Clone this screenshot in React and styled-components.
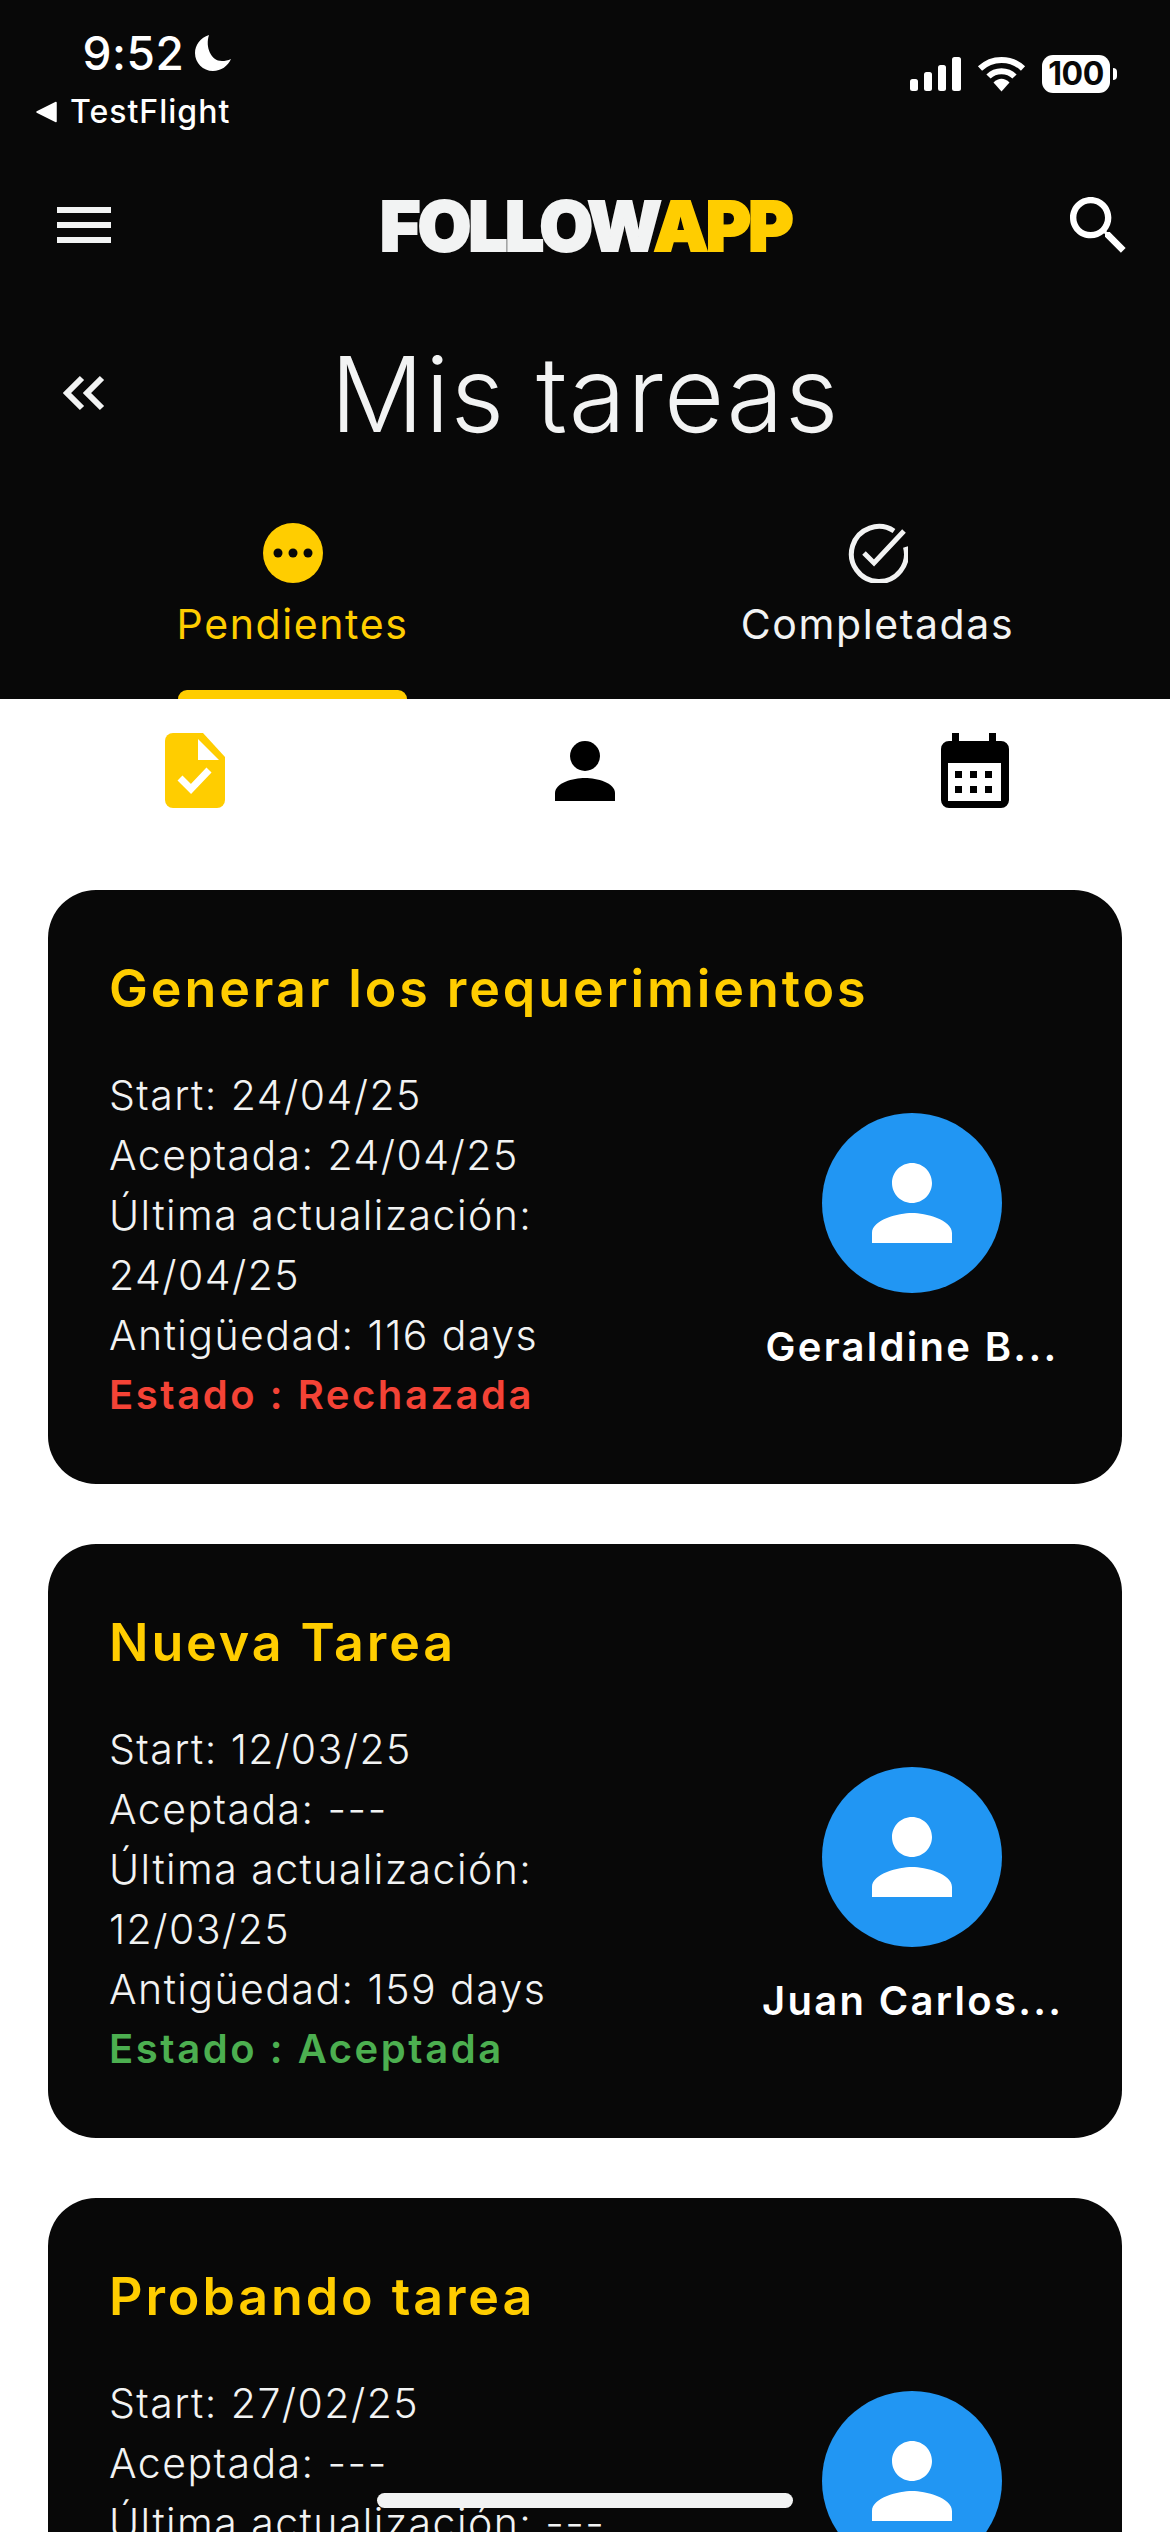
import React from 'react';
import styled, { createGlobalStyle } from 'styled-components';

const Y = '#ffcd00', K = '#080808', W = '#f2f3f3';
const Global = createGlobalStyle`
  html, body { margin: 0; padding: 0; background: #fff; overflow: hidden; height: 2532px; }
  body { font-family: Inter, "Liberation Sans", sans-serif; }
  * { box-sizing: border-box; }
`;
const Page = styled.div`width:1170px;height:2532px;overflow:hidden;background:#fff;position:relative;`;
const Header = styled.header`background:${K};height:699px;color:${W};display:flex;flex-direction:column;`;
const StatusBar = styled.div`height:190px;display:flex;justify-content:space-between;padding:0 60px 0 36px;flex:none;`;
const StatusLeft = styled.div`display:flex;flex-direction:column;align-items:flex-end;padding-top:26px;color:#fff;`;
const TimeRow = styled.div`display:flex;align-items:center;gap:11px;font-size:46px;font-weight:500;line-height:54px;letter-spacing:.5px;margin-right:1px;`;
const BackApp = styled.div`display:flex;align-items:center;gap:12px;font-size:32px;font-weight:500;line-height:40px;margin:12px 2px 0 0;letter-spacing:1px;`;
const StatusRight = styled.div`display:flex;align-items:center;gap:16px;height:38px;margin-top:55px;`;
const Battery = styled.div`width:68px;height:38px;border-radius:11px;background:#fff;color:${K};font-size:32px;font-weight:700;line-height:38px;text-align:center;position:relative;letter-spacing:-.5px;
  &::after{content:"";position:absolute;left:71px;top:13px;width:4px;height:12px;border-radius:0 4px 4px 0;background:#fff;}`;
const Nav = styled.div`height:72px;margin-top:-1px;display:flex;align-items:center;justify-content:space-between;padding:0 44px 0 57px;flex:none;`;
const Logo = styled.div`font-family:Inter,sans-serif;font-weight:900;font-size:69px;line-height:72px;letter-spacing:-2.6px;-webkit-text-stroke:2px currentColor;color:${W};transform:translate(-5px,1px);`;
const LogoAccent = styled.span`color:${Y};`;
const TitleRow = styled.div`height:132px;margin-top:67px;position:relative;display:flex;align-items:center;justify-content:center;flex:none;`;
const Title = styled.h1`margin:0;font-weight:300;font-size:104px;line-height:132px;color:${W};letter-spacing:1.2px;`;
const Back = styled.div`position:absolute;left:63px;top:47px;display:flex;`;
const Tabs = styled.div`display:flex;flex:1;`;
const Tab = styled.div`width:50%;display:flex;flex-direction:column;align-items:center;padding-top:${p=>p.$top}px;color:${p=>p.$active?Y:W};`;
const TabLabel = styled.div`font-size:41px;line-height:50px;margin-top:16px;letter-spacing:1.6px;`;
const Indicator = styled.div`width:229px;height:9px;background:${Y};border-radius:9px 9px 0 0;margin-top:auto;`;
const IconTabs = styled.div`height:191px;display:flex;padding-top:34px;`;
const IconTab = styled.div`width:33.333%;display:flex;justify-content:center;`;
const List = styled.main`padding:0 48px;display:flex;flex-direction:column;gap:60px;`;
const Card = styled.article`background:${K};border-radius:48px;padding:60px 62px 59px 61px;`;
const CardTitle = styled.h2`margin:0 0 37px;color:${Y};font-size:52px;line-height:78px;font-weight:600;letter-spacing:2.9px;`;
const CardBody = styled.div`display:flex;justify-content:space-between;align-items:center;`;
const Details = styled.div`width:530px;`;
const Line = styled.div`color:${W};font-size:41px;line-height:60px;font-weight:350;letter-spacing:1.45px;`;
const Status = styled(Line)`color:${p=>p.$color};font-weight:600;font-size:40px;letter-spacing:2.55px;`;
const Assignee = styled.div`width:300px;display:flex;flex-direction:column;align-items:center;margin:0 -2px 2px 0;`;
const Avatar = styled.div`width:180px;height:180px;border-radius:50%;background:#2196f3;display:flex;align-items:center;justify-content:center;`;
const Name = styled.div`margin-top:26px;width:100%;text-align:center;color:#fff;font-size:40px;line-height:56px;font-weight:600;letter-spacing:2.3px;white-space:nowrap;`;
const HomeBar = styled.div`position:absolute;left:377px;top:2493px;width:416px;height:15px;border-radius:8px;background:${W};`;

const Person = ({size=120,color='#fff'}) => (
  <svg width={size} height={size} viewBox="0 0 24 24" fill={color}><path d="M12 12c2.21 0 4-1.79 4-4s-1.79-4-4-4-4 1.79-4 4 1.79 4 4 4zm0 2c-2.67 0-8 1.34-8 4v2h16v-2c0-2.66-5.33-4-8-4z"/></svg>
);

const tasks = [
  {t:'Generar los requerimientos',s:'24/04/25',a:'24/04/25',u:'24/04/25',d:'116',st:'Rechazada',c:'#f44336',n:'Geraldine B...'},
  {t:'Nueva Tarea',s:'12/03/25',a:'---',u:'12/03/25',d:'159',st:'Aceptada',c:'#4caf50',n:'Juan Carlos...'},
  {t:'Probando tarea',s:'27/02/25',a:'---',u:'---',d:'170',st:'Aceptada',c:'#4caf50',n:'Juan Carlos...'},
];

export default function App(){
  return (
    <Page>
      <Global/>
      <Header>
        <StatusBar>
          <StatusLeft>
            <TimeRow>9:52
              <svg width="36" height="36" viewBox="0 0 36 36" fill="#fff"><path d="M14 0C5.5 2.5 0 10 0 18c0 10 8 18 18 18 8 0 15-5 18-12-3 1.5-6 2-9 2C16 26 10 12 14 0z"/></svg>
            </TimeRow>
            <BackApp>
              <svg width="22" height="22" viewBox="0 0 22 22" fill="#fff"><path d="M1 11 20 1.5v19z" strokeLinejoin="round" stroke="#fff" strokeWidth="1.5"/></svg>
              TestFlight
            </BackApp>
          </StatusLeft>
          <StatusRight>
            <svg width="51" height="34" viewBox="0 0 51 34" fill="#fff"><rect x="0" y="22" width="8" height="12" rx="2.5"/><rect x="14" y="15" width="8" height="19" rx="2.5"/><rect x="28" y="8" width="8" height="26" rx="2.5"/><rect x="42" y="0" width="9" height="34" rx="2.5"/></svg>
            <svg width="49" height="36" viewBox="0 0 49 36" fill="none"><path d="M3 12.5C15 1 34 1 46 12.5" stroke="#fff" strokeWidth="6"/><path d="M11.5 20.5C18.5 13.5 30.5 13.5 37.5 20.5" stroke="#fff" strokeWidth="6"/><path d="M16.5 26.5C21.5 21.5 27.5 21.5 32.5 26.5L24.5 35.5Z" fill="#fff"/></svg>
            <Battery>100</Battery>
          </StatusRight>
        </StatusBar>
        <Nav>
          <svg width="54" height="36" viewBox="0 0 54 36" fill={W}><rect width="54" height="6" y="0"/><rect width="54" height="6" y="15"/><rect width="54" height="6" y="30"/></svg>
          <Logo>FOLLOW<LogoAccent>APP</LogoAccent></Logo>
          <svg width="56" height="56" viewBox="3 3 17.6 17.6" fill="#fff"><path d="M15.5 14h-.79l-.28-.27C15.41 12.59 16 11.11 16 9.5 16 5.91 13.09 3 9.5 3S3 5.91 3 9.5 5.91 16 9.5 16c1.61 0 3.09-.59 4.23-1.57l.27.28v.79l5 4.99L20.49 19l-4.99-5zm-6 0C7.01 14 5 11.99 5 9.5S7.01 5 9.5 5 14 7.01 14 9.5 11.99 14 9.5 14z"/></svg>
        </Nav>
        <TitleRow>
          <Back>
            <svg width="42" height="36" viewBox="0 0 42 36" fill="none" stroke={W} strokeWidth="6"><path d="M19 3 4 18l15 15M39 3 24 18l15 15"/></svg>
          </Back>
          <Title>Mis tareas</Title>
        </TitleRow>
        <Tabs>
          <Tab $active $top={63}>
            <svg width="60" height="60" viewBox="0 0 60 60"><circle cx="30" cy="30" r="30" fill={Y}/><circle cx="15" cy="30" r="4.5" fill={K}/><circle cx="30" cy="30" r="4.5" fill={K}/><circle cx="45" cy="30" r="4.5" fill={K}/></svg>
            <TabLabel>Pendientes</TabLabel>
            <Indicator/>
          </Tab>
          <Tab $top={63}>
            <svg width="60" height="60" viewBox="0 0 60 60" fill="none" stroke={W} strokeWidth="5"><path d="M46 8A27.5 27.5 0 1 0 57.5 24"/><path d="M16 30 26 40 56 8"/></svg>
            <TabLabel>Completadas</TabLabel>
          </Tab>
        </Tabs>
      </Header>
      <IconTabs>
        <IconTab>
          <svg width="60" height="75" viewBox="0 0 60 75"><path d="M8 0h30l22 24v43a8 8 0 0 1-8 8H8a8 8 0 0 1-8-8V8a8 8 0 0 1 8-8z" fill={Y}/><path d="M33 6v21h21z" fill="#fff"/><path d="M15 45l11 11L44 37" fill="none" stroke="#fff" strokeWidth="7"/></svg>
        </IconTab>
        <IconTab>
          <svg width="60" height="75" viewBox="0 0 60 75" fill="#000"><circle cx="30" cy="23" r="15"/><path d="M0 68V60C0 50 18 45 30 45s30 5 30 15v8z"/></svg>
        </IconTab>
        <IconTab>
          <svg width="68" height="75" viewBox="0 0 68 75" fill="#000"><path d="M11 0h7v8h30V0h7v8h5a8 8 0 0 1 8 8v51a8 8 0 0 1-8 8H8a8 8 0 0 1-8-8V16a8 8 0 0 1 8-8h3z"/><path d="M7 30h53v38H7z" fill="#fff"/><path d="M14 38h7v7h-7zM29 38h7v7h-7zM44 38h7v7h-7zM14 53h7v7h-7zM29 53h7v7h-7zM44 53h7v7h-7z"/></svg>
        </IconTab>
      </IconTabs>
      <List>
        {tasks.map(x=>(
          <Card key={x.t}>
            <CardTitle>{x.t}</CardTitle>
            <CardBody>
              <Details>
                <Line>Start: {x.s}</Line>
                <Line>Aceptada: {x.a}</Line>
                <Line>Última actualización: {x.u}</Line>
                <Line>Antigüedad: {x.d} days</Line>
                <Status $color={x.c}>Estado : {x.st}</Status>
              </Details>
              <Assignee>
                <Avatar><Person/></Avatar>
                <Name>{x.n}</Name>
              </Assignee>
            </CardBody>
          </Card>
        ))}
      </List>
      <HomeBar/>
    </Page>
  );
}
